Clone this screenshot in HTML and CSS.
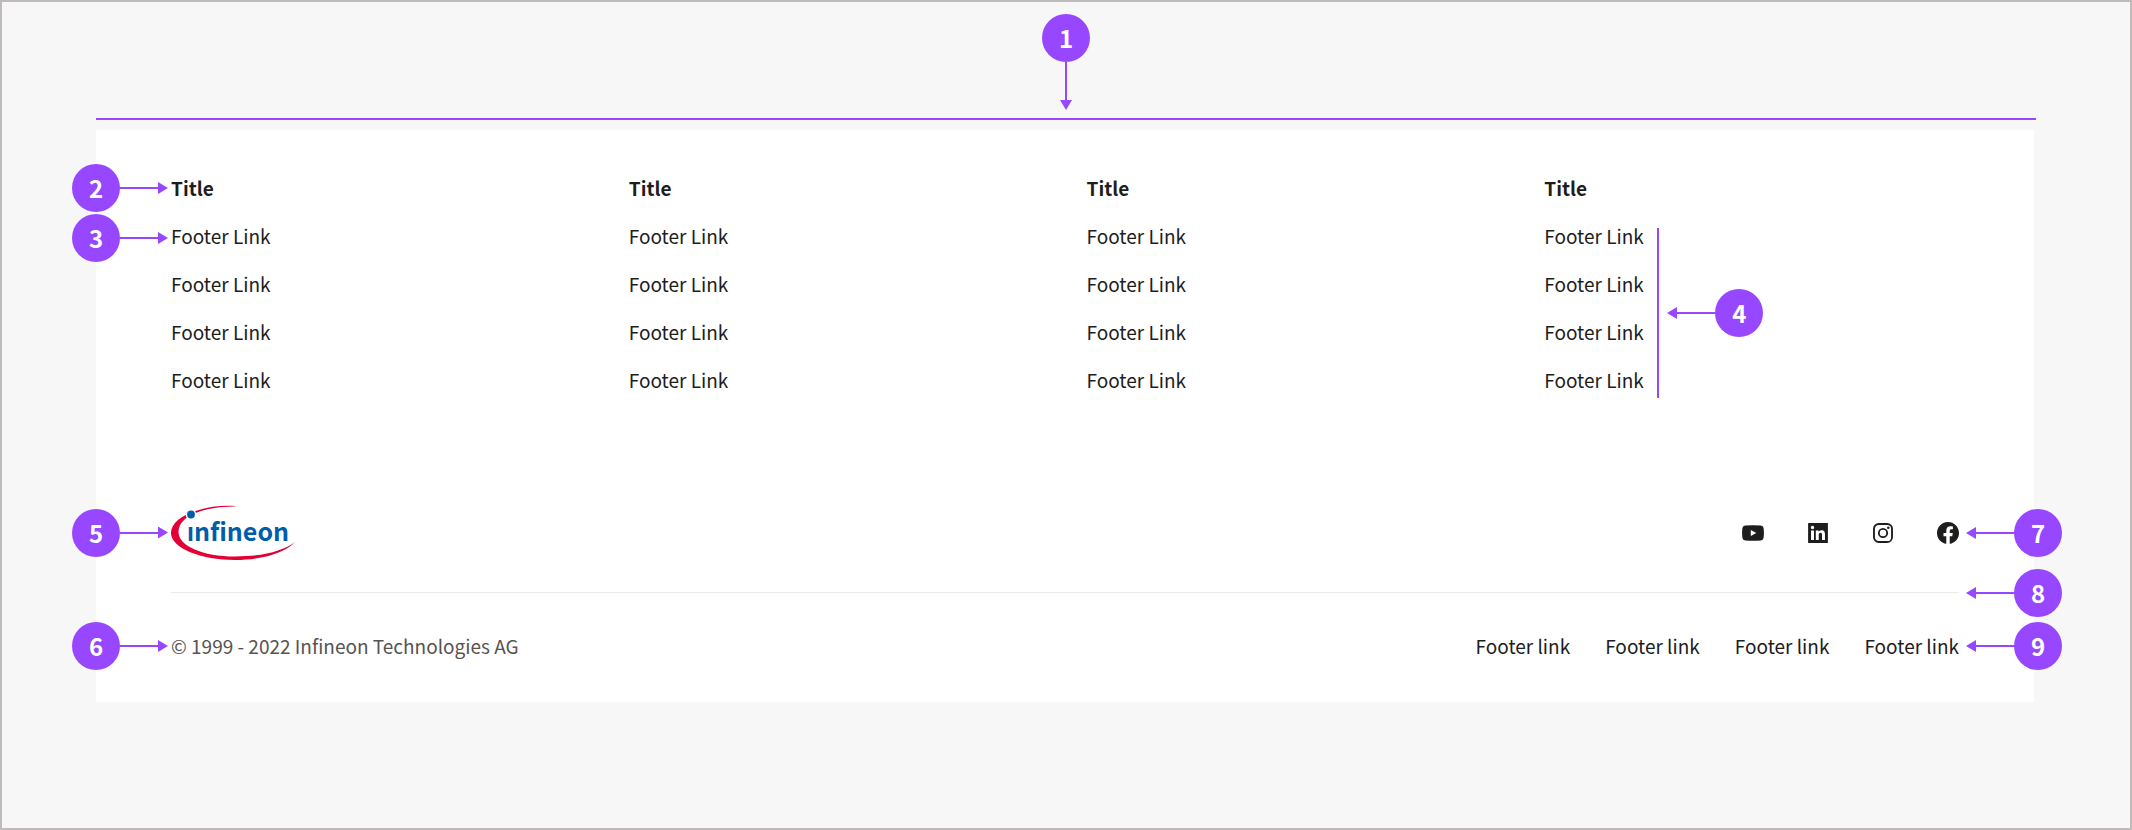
FILE: index.html
```html
<!DOCTYPE html>
<html lang="en">
<head>
<meta charset="utf-8">
<title>Footer anatomy</title>
<link rel="stylesheet" href="styles.css">
</head>
<body>
<main class="board">
  <div class="extent">
    <div class="callout callout-down"><span class="badge">1</span><span class="arrow"></span></div>
    <div class="extent-rule"></div>
  </div>

  <footer class="footer">
    <div class="marker-stack">
      <div class="callout"><span class="badge">2</span><span class="arrow"></span></div>
      <div class="callout"><span class="badge">3</span><span class="arrow"></span></div>
    </div>

    <div class="columns">
      <section class="column">
        <h2 class="column-title">Title</h2>
        <ul class="link-list">
          <li><a href="#">Footer Link</a></li>
          <li><a href="#">Footer Link</a></li>
          <li><a href="#">Footer Link</a></li>
          <li><a href="#">Footer Link</a></li>
        </ul>
      </section>
      <section class="column">
        <h2 class="column-title">Title</h2>
        <ul class="link-list">
          <li><a href="#">Footer Link</a></li>
          <li><a href="#">Footer Link</a></li>
          <li><a href="#">Footer Link</a></li>
          <li><a href="#">Footer Link</a></li>
        </ul>
      </section>
      <section class="column">
        <h2 class="column-title">Title</h2>
        <ul class="link-list">
          <li><a href="#">Footer Link</a></li>
          <li><a href="#">Footer Link</a></li>
          <li><a href="#">Footer Link</a></li>
          <li><a href="#">Footer Link</a></li>
        </ul>
      </section>
      <section class="column">
        <h2 class="column-title">Title</h2>
        <ul class="link-list">
          <li><a href="#">Footer Link</a></li>
          <li><a href="#">Footer Link</a></li>
          <li><a href="#">Footer Link</a></li>
          <li><a href="#">Footer Link</a></li>
        </ul>
        <div class="bracket">
          <div class="callout callout-left"><span class="badge">4</span><span class="arrow"></span></div>
        </div>
      </section>
    </div>

    <div class="row brand-row">
      <div class="callout row-start"><span class="badge">5</span><span class="arrow"></span></div>
      <a class="logo" href="#" aria-label="Infineon">
        <svg width="124" height="55" viewBox="0 0 124 55" aria-hidden="true">
          <path fill="#e30034" d="M66 1.200C52 0 37 1.800 26 5.500C10 10.500 0 18.500 0 28C0 43 30 55 64 55C93 55 115 47 124 37C112 46 92 51.500 64 51.500C32 51.500 7.500 41 7.500 27C7.500 17 17 10 30 6C40 3 52 1.500 66 1.200Z"/>
          <circle cx="20" cy="9.500" r="5.300" fill="#fff"/>
          <circle cx="20" cy="9.500" r="3.900" fill="#005dab"/>
          <text class="logo-text" x="16" y="36">ınfineon</text>
        </svg>
      </a>
      <nav class="social" aria-label="Social media">
        <a href="#" aria-label="YouTube">
          <svg class="icon" viewBox="2 2 20 20"><path fill-rule="evenodd" d="M5 5.200Q12 4.600 19 5.200Q21.300 5.400 21.600 7.500Q22.300 12 21.600 16.500Q21.300 18.600 19 18.800Q12 19.400 5 18.800Q2.700 18.600 2.400 16.500Q1.700 12 2.400 7.500Q2.700 5.400 5 5.200ZM10 9.200V14.800L15 12Z"/></svg>
        </a>
        <a href="#" aria-label="LinkedIn">
          <svg class="icon" viewBox="2 2 20 20"><path fill-rule="evenodd" d="M3.300 3H20.700Q21 3 21 3.300V20.700Q21 21 20.700 21H3.300Q3 21 3 20.700V3.300Q3 3 3.300 3ZM18.335 18.339H15.670v-4.177c0-.996-.020-2.278-1.390-2.278-1.389 0-1.601 1.084-1.601 2.205v4.250h-2.666V9.750h2.560v1.170h.035c.358-.674 1.228-1.387 2.528-1.387 2.700 0 3.200 1.778 3.200 4.091v4.715zM7.003 8.575a1.546 1.546 0 0 1-1.548-1.549 1.548 1.548 0 1 1 1.547 1.549zm1.336 9.764H5.666V9.750H8.340v8.589z"/></svg>
        </a>
        <a href="#" aria-label="Instagram">
          <svg class="icon" viewBox="2 2 20 20"><rect class="stroke" x="3.800" y="3.800" width="16.400" height="16.400" rx="4.400"/><circle class="stroke" cx="12" cy="12" r="3.800"/><circle cx="16.800" cy="7.200" r="1.150"/></svg>
        </a>
        <a href="#" aria-label="Facebook">
          <svg class="icon" viewBox="2 2 20 20"><path d="M12 2C6.477 2 2 6.477 2 12c0 4.991 3.657 9.128 8.438 9.879V14.890h-2.540V12h2.540V9.797c0-2.506 1.492-3.890 3.777-3.890 1.094 0 2.238.195 2.238.195v2.460h-1.260c-1.243 0-1.630.771-1.630 1.562V12h2.773l-.443 2.890h-2.330v6.989C18.343 21.129 22 16.990 22 12c0-5.523-4.477-10-10-10z"/></svg>
        </a>
      </nav>
      <div class="callout callout-left row-end"><span class="badge">7</span><span class="arrow"></span></div>
    </div>

    <div class="row divider">
      <div class="callout callout-left row-end"><span class="badge">8</span><span class="arrow"></span></div>
    </div>

    <div class="row legal-row">
      <div class="callout row-start"><span class="badge">6</span><span class="arrow"></span></div>
      <p class="copyright">© 1999 - 2022 Infineon Technologies AG</p>
      <nav class="legal-links" aria-label="Legal">
        <a href="#">Footer link</a>
        <a href="#">Footer link</a>
        <a href="#">Footer link</a>
        <a href="#">Footer link</a>
      </nav>
      <div class="callout callout-left row-end"><span class="badge">9</span><span class="arrow"></span></div>
    </div>
  </footer>
</main>
</body>
</html>
```

FILE: styles.css
```css
:root {
  --accent: #9747ff;
  --ink: #1d1d1d;
  --muted: #575352;
}

* {
  box-sizing: border-box;
}

body {
  margin: 0;
  font: 400 19px/28px "Noto Sans CJK SC", "Noto Sans", sans-serif;
  color: var(--ink);
}

a {
  color: inherit;
  text-decoration: none;
}

.board {
  min-height: 100vh;
  padding: 12px 94px;
  border: 2px solid #bfbbbb;
  background: #f7f7f7;
}

/* Callouts: a numbered badge with an arrow */
.callout {
  display: flex;
  align-items: center;
  width: 96px;
}

.badge {
  display: flex;
  flex: none;
  align-items: center;
  justify-content: center;
  width: 48px;
  height: 48px;
  border-radius: 50%;
  background: var(--accent);
  color: #fff;
  font-size: 24px;
  font-weight: 700;
}

.arrow {
  position: relative;
  flex: 1;
  height: 2px;
  background: linear-gradient(var(--accent), var(--accent)) 0 0 / calc(100% - 8px) 2px no-repeat;
}

.arrow::after {
  content: "";
  position: absolute;
  right: 0;
  top: -5px;
  width: 10px;
  height: 12px;
  background: var(--accent);
  clip-path: polygon(0 0, 100% 50%, 0 100%);
}

.callout-left {
  flex-direction: row-reverse;
}

.callout-left .arrow {
  transform: rotate(180deg);
}

.callout-down {
  flex-direction: column;
  width: 48px;
  height: 96px;
}

.callout-down .arrow {
  width: 2px;
  height: auto;
  background: linear-gradient(var(--accent), var(--accent)) 0 0 / 2px calc(100% - 8px) no-repeat;
}

.callout-down .arrow::after {
  top: auto;
  right: -5px;
  bottom: 0;
  width: 12px;
  height: 10px;
  clip-path: polygon(0 0, 100% 0, 50% 100%);
}

.extent {
  display: flex;
  flex-direction: column;
  align-items: center;
  gap: 8px;
  margin-bottom: 10px;
}

.extent-rule {
  align-self: stretch;
  height: 2px;
  background: var(--accent);
}

/* Footer */
.footer {
  position: relative;
  margin-right: 2px;
  padding: 34px 75px 42px;
  background: #fff;
}

.marker-stack {
  position: absolute;
  top: 34px;
  left: -24px;
  display: flex;
  flex-direction: column;
  gap: 2px;
}

.columns {
  display: grid;
  grid-template-columns: repeat(4, 1fr);
  gap: 43px;
}

.column {
  position: relative;
}

.column-title {
  margin: 0;
  font-size: 19px;
  font-weight: 700;
  line-height: 48px;
}

.link-list {
  margin: 0;
  padding: 0;
  list-style: none;
  line-height: 48px;
}

.bracket {
  position: absolute;
  top: 64px;
  bottom: 6px;
  left: 113px;
  display: flex;
  align-items: center;
  padding-left: 8px;
  border-left: 2px solid var(--accent);
}

.row {
  position: relative;
  display: flex;
  align-items: center;
  justify-content: space-between;
}

.row-start,
.row-end {
  position: absolute;
  top: 50%;
  margin-top: -24px;
}

.row-start {
  left: -99px;
}

.row-end {
  right: -103px;
}

.brand-row {
  margin-top: 101px;
}

.logo,
.logo svg {
  display: block;
}

.logo-text {
  fill: #005dab;
  font: 700 25px "Noto Sans CJK SC", sans-serif;
}

.social {
  display: flex;
  gap: 43px;
}

.icon {
  display: block;
  width: 22px;
  height: 22px;
  fill: var(--ink);
}

.icon .stroke {
  fill: none;
  stroke: var(--ink);
  stroke-width: 1.7;
}

.divider {
  height: 1px;
  margin: 32px 0 39px;
  background: #ebebeb;
}

.copyright {
  margin: 0;
  color: var(--muted);
}

.legal-links {
  display: flex;
  gap: 35px;
}
```
